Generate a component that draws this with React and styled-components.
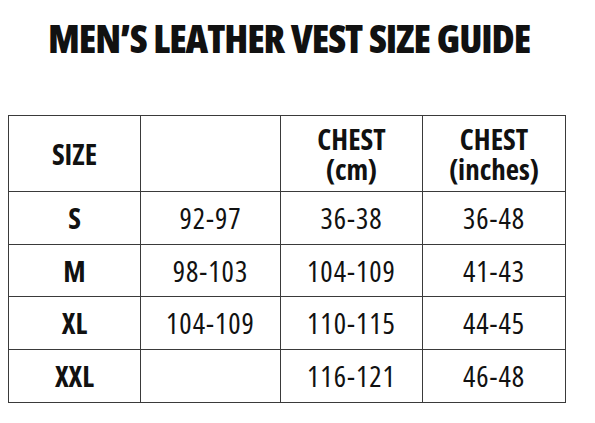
import React from "react";
import styled, { createGlobalStyle } from "styled-components";

const Global = createGlobalStyle`
  html, body { margin: 0; padding: 0; background: #fff; }
  body { width: 595px; height: 423px; overflow: hidden; }
`;

const Page = styled.div`
  width: 595px;
  height: 423px;
  padding: 16px 0 0 8px;
  box-sizing: border-box;
  color: #111;
`;

const Title = styled.h1`
  margin: 0 0 0 40px;
  width: 490px;
  height: 44px;
  font-family: "Open Sans", "Noto Sans", sans-serif;
  font-stretch: 75%;
  font-weight: 800;
  font-size: 39.5px;
  line-height: 44px;
  white-space: nowrap;
  letter-spacing: -1.1px;
  word-spacing: 1px;
`;

const Table = styled.table`
  margin-top: 55px;
  width: 557px;
  border-collapse: collapse;
  table-layout: fixed;
  font-family: "Open Sans", "Noto Sans", sans-serif;
  font-stretch: 75%;
`;

const Cell = styled.td`
  border: 1.5px solid #3a3a3a;
  text-align: center;
  vertical-align: middle;
  padding: 0;
  height: ${(p) => (p.$head ? "75px" : "51.7px")};
  font-size: 29px;
  font-weight: ${(p) => (p.$bold ? 700 : 400)};
  letter-spacing: ${(p) => (p.$bold ? "0" : "1px")};
  line-height: 30px;
`;

const cols = [132, 140, 142, 143];

const rows = [
  ["S", "92-97", "36-38", "36-48"],
  ["M", "98-103", "104-109", "41-43"],
  ["XL", "104-109", "110-115", "44-45"],
  ["XXL", "", "116-121", "46-48"],
];

export default function App() {
  return (
    <>
      <Global />
      <Page>
        <Title>MEN’S LEATHER VEST SIZE GUIDE</Title>
        <Table>
          <colgroup>
            {cols.map((w, i) => (
              <col key={i} style={{ width: w }} />
            ))}
          </colgroup>
          <tbody>
            <tr>
              <Cell $head $bold>SIZE</Cell>
              <Cell $head $bold></Cell>
              <Cell $head $bold>CHEST<br />(cm)</Cell>
              <Cell $head $bold>CHEST<br />(inches)</Cell>
            </tr>
            {rows.map((r) => (
              <tr key={r[0]}>
                {r.map((v, i) => (
                  <Cell key={i} $bold={i === 0}>{v}</Cell>
                ))}
              </tr>
            ))}
          </tbody>
        </Table>
      </Page>
    </>
  );
}
